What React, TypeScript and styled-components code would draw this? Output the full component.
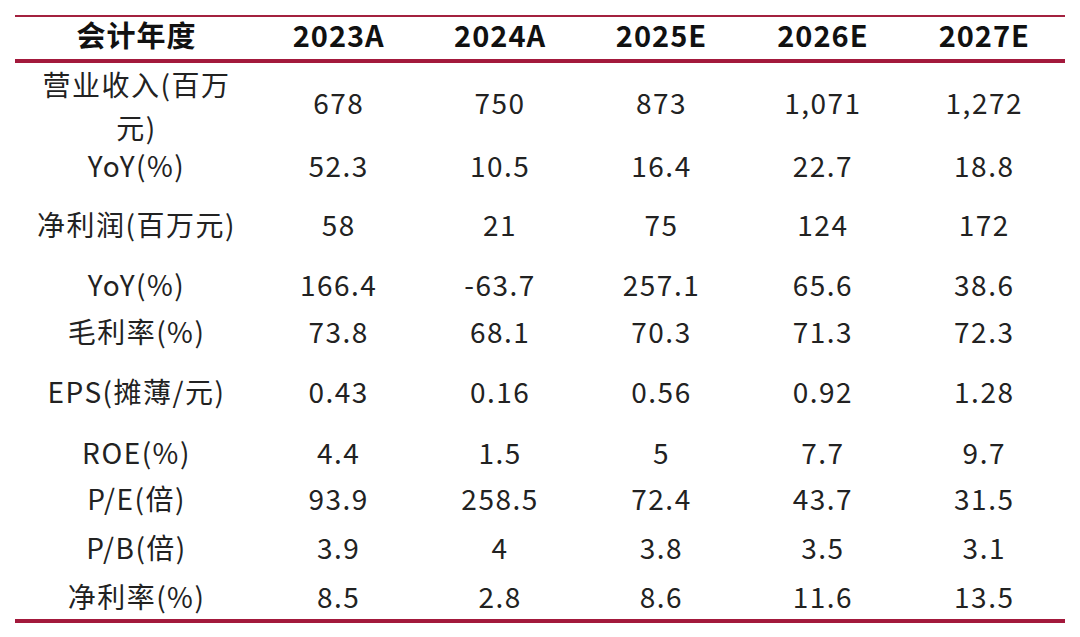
import React from "react";
import styled, { createGlobalStyle } from "styled-components";

const GlobalStyle = createGlobalStyle`
  html, body {
    margin: 0;
    padding: 0;
    background: #ffffff;
  }
  body {
    font-family: "Noto Sans CJK SC", "Noto Sans", sans-serif;
  }
`;

const Page = styled.div`
  width: 1080px;
  height: 637px;
  padding: 15px 15px 0 15px;
  box-sizing: border-box;
`;

const Table = styled.div`
  width: 1050px;
  border-top: 2px solid #a3213f;
  border-bottom: 4px solid #a3193c;
`;

const Row = styled.div<{ $h: number; $head?: boolean }>`
  display: grid;
  grid-template-columns: 243px repeat(5, 1fr);
  height: ${(p) => p.$h}px;
  align-items: center;
  border-bottom: ${(p) => (p.$head ? "4px solid #a3193c" : "none")};
`;

const Cell = styled.div<{ $head?: boolean }>`
  text-align: center;
  padding-bottom: 8px;
  font-size: ${(p) => (p.$head ? 29 : 28)}px;
  letter-spacing: ${(p) => (p.$head ? 1 : 1.5)}px;
  line-height: 30px;
  font-weight: ${(p) => (p.$head ? 700 : 400)};
  color: ${(p) => (p.$head ? "#111111" : "#222222")};
`;

const Label = styled(Cell)<{ $wrap?: boolean }>`
  padding-left: 16px;
  padding-right: 16px;
  padding-bottom: ${(p) => (p.$wrap ? 0 : 8)}px;
  line-height: ${(p) => (p.$wrap ? 43 : 30)}px;
`;

const header = ["会计年度", "2023A", "2024A", "2025E", "2026E", "2027E"];

const rows: { label: string; values: string[]; h: number }[] = [
  { label: "营业收入(百万元)", values: ["678", "750", "873", "1,071", "1,272"], h: 86 },
  { label: "YoY(%)", values: ["52.3", "10.5", "16.4", "22.7", "18.8"], h: 40 },
  { label: "净利润(百万元)", values: ["58", "21", "75", "124", "172"], h: 78 },
  { label: "YoY(%)", values: ["166.4", "-63.7", "257.1", "65.6", "38.6"], h: 42 },
  { label: "毛利率(%)", values: ["73.8", "68.1", "70.3", "71.3", "72.3"], h: 52 },
  { label: "EPS(摊薄/元)", values: ["0.43", "0.16", "0.56", "0.92", "1.28"], h: 68 },
  { label: "ROE(%)", values: ["4.4", "1.5", "5", "7.7", "9.7"], h: 54 },
  { label: "P/E(倍)", values: ["93.9", "258.5", "72.4", "43.7", "31.5"], h: 38 },
  { label: "P/B(倍)", values: ["3.9", "4", "3.8", "3.5", "3.1"], h: 60 },
  { label: "净利率(%)", values: ["8.5", "2.8", "8.6", "11.6", "13.5"], h: 38 },
];

export default function App() {
  return (
    <Page>
      <GlobalStyle />
      <Table>
        <Row $h={42} $head>
          {header.map((h) => (
            <Cell key={h} $head>
              {h}
            </Cell>
          ))}
        </Row>
        {rows.map((r, i) => (
          <Row key={i} $h={r.h}>
            <Label $wrap={i === 0}>{r.label}</Label>
            {r.values.map((v, j) => (
              <Cell key={j}>{v}</Cell>
            ))}
          </Row>
        ))}
      </Table>
    </Page>
  );
}
